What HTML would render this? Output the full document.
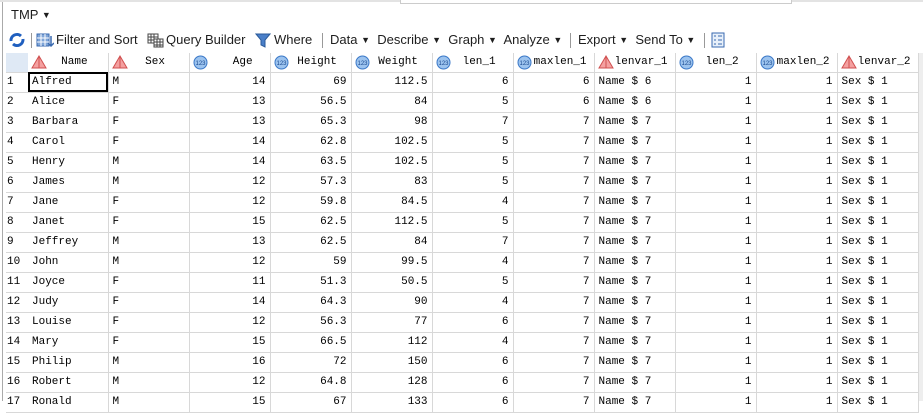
<!DOCTYPE html>
<html><head><meta charset="utf-8"><style>
body{margin:0;width:923px;height:401px;overflow:hidden;background:#fff;font-family:"Liberation Sans",sans-serif;position:relative}
.tb{position:absolute;font-size:13px;color:#1e1e1e;white-space:nowrap}
.tb b{font-weight:normal;font-size:9px;vertical-align:1px}
.sep{position:absolute;top:33px;width:1px;height:15px;background:#999}
table{position:absolute;left:6px;top:53px;width:912px;border-collapse:collapse;table-layout:fixed;font-family:"Liberation Mono","Noto Sans CJK SC",monospace;font-size:11px;color:#000}
td{height:20px;border-right:1px solid #d8d8d8;border-bottom:1px solid #d8d8d8;padding:0 4px;white-space:nowrap;overflow:hidden;box-sizing:border-box}
td.r{text-align:right}
tr.h td{height:19px;text-align:center;position:relative}
td.n{border-right:none;padding-left:1px}
.ic{position:absolute;left:3px;top:2px}
</style></head><body>
<div style="position:absolute;left:0;top:0;width:923px;height:2px;background:#e3e3e3"></div>
<div style="position:absolute;left:400px;top:0;width:390px;height:3px;border:1px solid #ccc;border-top:none;background:#fff"></div>
<div style="position:absolute;left:2px;top:2px;width:1px;height:399px;background:#aaa"></div>
<div class="tb" style="left:11px;top:7px">TMP <b>&#9660;</b></div>
<svg style="position:absolute;left:8px;top:32px" width="18" height="16"><path d="M3 9a6 6 0 0 1 10-5" stroke="#1f5fbf" stroke-width="3" fill="none"/><path d="M15 7a6 6 0 0 1-10 5" stroke="#1f5fbf" stroke-width="3" fill="none"/></svg>
<div class="sep" style="left:31px"></div>
<svg style="position:absolute;left:36px;top:32px" width="18" height="16"><rect x="1" y="2" width="12" height="12" fill="#7fa5d8" stroke="#3a6ab0"/><path d="M1 6h12M1 10h12M5 2v12M9 2v12" stroke="#fff"/><path d="M15 4v10M12 11l3 3 3-3" stroke="#3a6ab0" stroke-width="1.5" fill="none"/></svg>
<div class="tb" style="left:56px;top:32px">Filter and Sort</div>
<svg style="position:absolute;left:147px;top:32px" width="18" height="16"><rect x="1" y="2" width="10" height="9" fill="#fff" stroke="#444"/><path d="M1 5h10M1 8h10M4 2v9M7 2v9" stroke="#444"/><rect x="7" y="7" width="9" height="8" fill="#fff" stroke="#444"/><path d="M7 10h9M7 13h9M10 7v8M13 7v8" stroke="#444"/></svg>
<div class="tb" style="left:166px;top:32px">Query Builder</div>
<svg style="position:absolute;left:255px;top:32px" width="16" height="16"><path d="M1 2h14l-5 6v7l-4-2V8z" fill="#4a7fc8" stroke="#2a5a9a"/></svg>
<div class="tb" style="left:274px;top:32px">Where</div>
<div class="sep" style="left:322px"></div>
<div class="tb" style="left:330px;top:32px">Data <b>&#9660;</b>&nbsp; Describe <b>&#9660;</b>&nbsp; Graph <b>&#9660;</b>&nbsp; Analyze <b>&#9660;</b></div>
<div class="sep" style="left:570px"></div>
<div class="tb" style="left:578px;top:32px">Export <b>&#9660;</b>&nbsp; Send To <b>&#9660;</b></div>
<div class="sep" style="left:704px"></div>
<svg style="position:absolute;left:711px;top:32px" width="14" height="16"><rect x="1" y="1" width="12" height="14" fill="#e8f0fa" stroke="#3a6ab0"/><path d="M3 4h2M3 8h2M3 12h2M7 4h4M7 8h4M7 12h4" stroke="#3a6ab0"/></svg>
<div style="position:absolute;left:918px;top:53px;width:5px;height:348px;background:#eee"></div>
<table>
<colgroup><col style="width:22px"><col style="width:80px"><col style="width:81px"><col style="width:81px"><col style="width:81px"><col style="width:81px"><col style="width:81px"><col style="width:81px"><col style="width:81px"><col style="width:81px"><col style="width:81px"><col style="width:81px"></colgroup>
<tr class="h"><td style="background:#dfe9f5;border-right:none"></td>
<td><svg class="ic" width="16" height="14"><path d="M8 1L15 13H1z" fill="#f4a0a0" stroke="#d05050"/><path d="M8 1v12" stroke="#d05050"/></svg>&nbsp;&nbsp;Name</td>
<td><svg class="ic" width="16" height="14"><path d="M8 1L15 13H1z" fill="#f4a0a0" stroke="#d05050"/><path d="M8 1v12" stroke="#d05050"/></svg>&nbsp;&nbsp;Sex</td>
<td><svg class="ic" width="15" height="15"><circle cx="7.5" cy="7.5" r="6.5" fill="#9cc3ee" stroke="#3a78c8"/><text x="7.5" y="10" font-size="6" text-anchor="middle" fill="#1a4a90" font-family="Liberation Sans">123</text></svg>&nbsp;&nbsp;&nbsp;&nbsp;Age</td>
<td><svg class="ic" width="15" height="15"><circle cx="7.5" cy="7.5" r="6.5" fill="#9cc3ee" stroke="#3a78c8"/><text x="7.5" y="10" font-size="6" text-anchor="middle" fill="#1a4a90" font-family="Liberation Sans">123</text></svg>&nbsp;&nbsp;Height</td>
<td><svg class="ic" width="15" height="15"><circle cx="7.5" cy="7.5" r="6.5" fill="#9cc3ee" stroke="#3a78c8"/><text x="7.5" y="10" font-size="6" text-anchor="middle" fill="#1a4a90" font-family="Liberation Sans">123</text></svg>&nbsp;&nbsp;Weight</td>
<td><svg class="ic" width="15" height="15"><circle cx="7.5" cy="7.5" r="6.5" fill="#9cc3ee" stroke="#3a78c8"/><text x="7.5" y="10" font-size="6" text-anchor="middle" fill="#1a4a90" font-family="Liberation Sans">123</text></svg>&nbsp;&nbsp;len_1</td>
<td><svg class="ic" width="15" height="15"><circle cx="7.5" cy="7.5" r="6.5" fill="#9cc3ee" stroke="#3a78c8"/><text x="7.5" y="10" font-size="6" text-anchor="middle" fill="#1a4a90" font-family="Liberation Sans">123</text></svg>&nbsp;&nbsp;maxlen_1</td>
<td><svg class="ic" width="16" height="14"><path d="M8 1L15 13H1z" fill="#f4a0a0" stroke="#d05050"/><path d="M8 1v12" stroke="#d05050"/></svg>&nbsp;&nbsp;lenvar_1</td>
<td><svg class="ic" width="15" height="15"><circle cx="7.5" cy="7.5" r="6.5" fill="#9cc3ee" stroke="#3a78c8"/><text x="7.5" y="10" font-size="6" text-anchor="middle" fill="#1a4a90" font-family="Liberation Sans">123</text></svg>&nbsp;&nbsp;len_2</td>
<td><svg class="ic" width="15" height="15"><circle cx="7.5" cy="7.5" r="6.5" fill="#9cc3ee" stroke="#3a78c8"/><text x="7.5" y="10" font-size="6" text-anchor="middle" fill="#1a4a90" font-family="Liberation Sans">123</text></svg>&nbsp;&nbsp;maxlen_2</td>
<td><svg class="ic" width="16" height="14"><path d="M8 1L15 13H1z" fill="#f4a0a0" stroke="#d05050"/><path d="M8 1v12" stroke="#d05050"/></svg>&nbsp;&nbsp;lenvar_2</td>
</tr>
<tr><td class="n">1</td><td style="outline:2px solid #000;outline-offset:-2px">Alfred</td><td>M</td><td class="r">14</td><td class="r">69</td><td class="r">112.5</td><td class="r">6</td><td class="r">6</td><td>Name $ 6</td><td class="r">1</td><td class="r">1</td><td>Sex $ 1</td></tr>
<tr><td class="n">2</td><td>Alice</td><td>F</td><td class="r">13</td><td class="r">56.5</td><td class="r">84</td><td class="r">5</td><td class="r">6</td><td>Name $ 6</td><td class="r">1</td><td class="r">1</td><td>Sex $ 1</td></tr>
<tr><td class="n">3</td><td>Barbara</td><td>F</td><td class="r">13</td><td class="r">65.3</td><td class="r">98</td><td class="r">7</td><td class="r">7</td><td>Name $ 7</td><td class="r">1</td><td class="r">1</td><td>Sex $ 1</td></tr>
<tr><td class="n">4</td><td>Carol</td><td>F</td><td class="r">14</td><td class="r">62.8</td><td class="r">102.5</td><td class="r">5</td><td class="r">7</td><td>Name $ 7</td><td class="r">1</td><td class="r">1</td><td>Sex $ 1</td></tr>
<tr><td class="n">5</td><td>Henry</td><td>M</td><td class="r">14</td><td class="r">63.5</td><td class="r">102.5</td><td class="r">5</td><td class="r">7</td><td>Name $ 7</td><td class="r">1</td><td class="r">1</td><td>Sex $ 1</td></tr>
<tr><td class="n">6</td><td>James</td><td>M</td><td class="r">12</td><td class="r">57.3</td><td class="r">83</td><td class="r">5</td><td class="r">7</td><td>Name $ 7</td><td class="r">1</td><td class="r">1</td><td>Sex $ 1</td></tr>
<tr><td class="n">7</td><td>Jane</td><td>F</td><td class="r">12</td><td class="r">59.8</td><td class="r">84.5</td><td class="r">4</td><td class="r">7</td><td>Name $ 7</td><td class="r">1</td><td class="r">1</td><td>Sex $ 1</td></tr>
<tr><td class="n">8</td><td>Janet</td><td>F</td><td class="r">15</td><td class="r">62.5</td><td class="r">112.5</td><td class="r">5</td><td class="r">7</td><td>Name $ 7</td><td class="r">1</td><td class="r">1</td><td>Sex $ 1</td></tr>
<tr><td class="n">9</td><td>Jeffrey</td><td>M</td><td class="r">13</td><td class="r">62.5</td><td class="r">84</td><td class="r">7</td><td class="r">7</td><td>Name $ 7</td><td class="r">1</td><td class="r">1</td><td>Sex $ 1</td></tr>
<tr><td class="n">10</td><td>John</td><td>M</td><td class="r">12</td><td class="r">59</td><td class="r">99.5</td><td class="r">4</td><td class="r">7</td><td>Name $ 7</td><td class="r">1</td><td class="r">1</td><td>Sex $ 1</td></tr>
<tr><td class="n">11</td><td>Joyce</td><td>F</td><td class="r">11</td><td class="r">51.3</td><td class="r">50.5</td><td class="r">5</td><td class="r">7</td><td>Name $ 7</td><td class="r">1</td><td class="r">1</td><td>Sex $ 1</td></tr>
<tr><td class="n">12</td><td>Judy</td><td>F</td><td class="r">14</td><td class="r">64.3</td><td class="r">90</td><td class="r">4</td><td class="r">7</td><td>Name $ 7</td><td class="r">1</td><td class="r">1</td><td>Sex $ 1</td></tr>
<tr><td class="n">13</td><td>Louise</td><td>F</td><td class="r">12</td><td class="r">56.3</td><td class="r">77</td><td class="r">6</td><td class="r">7</td><td>Name $ 7</td><td class="r">1</td><td class="r">1</td><td>Sex $ 1</td></tr>
<tr><td class="n">14</td><td>Mary</td><td>F</td><td class="r">15</td><td class="r">66.5</td><td class="r">112</td><td class="r">4</td><td class="r">7</td><td>Name $ 7</td><td class="r">1</td><td class="r">1</td><td>Sex $ 1</td></tr>
<tr><td class="n">15</td><td>Philip</td><td>M</td><td class="r">16</td><td class="r">72</td><td class="r">150</td><td class="r">6</td><td class="r">7</td><td>Name $ 7</td><td class="r">1</td><td class="r">1</td><td>Sex $ 1</td></tr>
<tr><td class="n">16</td><td>Robert</td><td>M</td><td class="r">12</td><td class="r">64.8</td><td class="r">128</td><td class="r">6</td><td class="r">7</td><td>Name $ 7</td><td class="r">1</td><td class="r">1</td><td>Sex $ 1</td></tr>
<tr><td class="n">17</td><td>Ronald</td><td>M</td><td class="r">15</td><td class="r">67</td><td class="r">133</td><td class="r">6</td><td class="r">7</td><td>Name $ 7</td><td class="r">1</td><td class="r">1</td><td>Sex $ 1</td></tr>
</table>
</body></html>
